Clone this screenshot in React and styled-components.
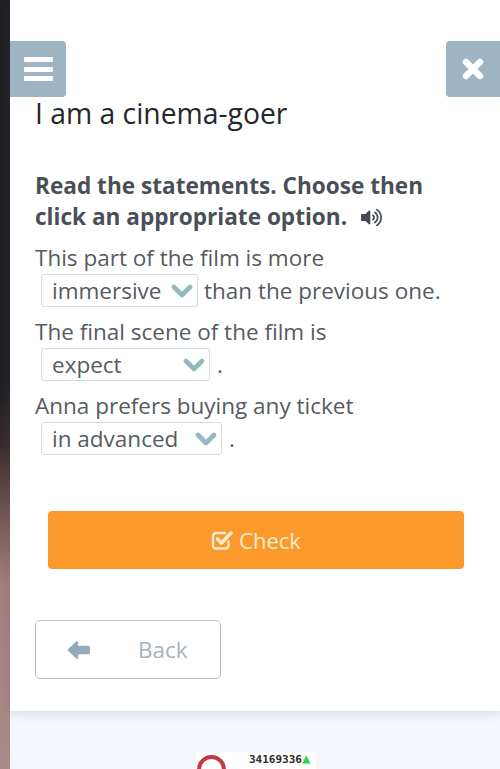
import React from "react";
import styled, { createGlobalStyle } from "styled-components";
import { FaVolumeUp } from "react-icons/fa";

const GlobalStyle = createGlobalStyle`
  html, body {
    margin: 0;
    padding: 0;
    background: #ffffff;
  }
  body {
    font-family: "Open Sans", "Liberation Sans", sans-serif;
    overflow: hidden;
  }
`;

const Page = styled.div`
  display: flex;
  width: 500px;
  height: 769px;
  overflow: hidden;
`;

const Strip = styled.div`
  flex: 0 0 10px;
  background: linear-gradient(180deg, #1f2024 0%, #1f2024 50%, #3a2c2e 58%, #6e5353 66%, #a67f7f 76%, #ab8a8a 100%);
`;

const Main = styled.div`
  flex: 1;
  display: flex;
  flex-direction: column;
  min-width: 0;
`;

const Card = styled.div`
  height: 711px;
  flex: none;
  background: #ffffff;
  box-shadow: 0 2px 10px rgba(70, 80, 90, 0.18);
  position: relative;
`;

const Header = styled.div`
  display: flex;
  justify-content: space-between;
  padding-top: 41px;
`;

const MenuButton = styled.div`
  width: 56px;
  height: 56px;
  background: #9fb4c3;
  border-radius: 0 4px 4px 0;
  display: flex;
  flex-direction: column;
  justify-content: center;
  align-items: center;
  gap: 4.5px;
`;

const MenuBar = styled.div`
  width: 29px;
  height: 5px;
  background: #ffffff;
  border-radius: 1px;
`;

const CloseButton = styled.div`
  width: 54px;
  height: 56px;
  background: #9fb4c3;
  border-radius: 4px 0 0 4px;
  display: flex;
  justify-content: center;
  align-items: center;
`;

const Content = styled.div`
  padding: 0 25px;
`;

const Title = styled.h1`
  margin: 0;
  font-size: 28.3px;
  line-height: 32px;
  font-weight: 400;
  color: #24282c;
`;

const Instructions = styled.div`
  margin-top: 41px;
  font-size: 22.6px;
  line-height: 31px;
  font-weight: 700;
  color: #4a4f57;
  width: 420px;
`;

const Speaker = styled(FaVolumeUp)`
  font-size: 21px;
  color: #444a58;
  margin-left: 14px;
  vertical-align: -3px;
`;

const Statement = styled.div`
  font-size: 22.5px;
  line-height: 33px;
  color: #565b60;
  margin-top: ${(p) => p.$top}px;
`;

const Answer = styled.div`
  display: flex;
  align-items: center;
  gap: 6px;
  margin-left: 6px;
`;

const Select = styled.div`
  box-sizing: border-box;
  width: ${(p) => p.$width}px;
  height: 33px;
  display: flex;
  align-items: center;
  justify-content: space-between;
  padding: 0 4px 0 10px;
  border: 1px solid #d5dcdf;
  border-radius: 3px;
  background: #ffffff;
`;

const Dot = styled.span`
  margin-left: 1px;
`;

const CheckButton = styled.div`
  margin: 56px 11px 0 13px;
  height: 58px;
  background: #fb9a2b;
  border-radius: 4px;
  color: #fdeccf;
  font-size: 22px;
  display: flex;
  justify-content: center;
  align-items: center;
  gap: 5px;
`;

const BackButton = styled.div`
  box-sizing: border-box;
  margin-top: 51px;
  width: 186px;
  height: 59px;
  border: 1.5px solid #b6c3cb;
  border-radius: 5px;
  background: #ffffff;
  color: #a3b4be;
  font-size: 22.5px;
  display: flex;
  align-items: center;
  padding-left: 30px;
  gap: 48px;
`;

const Footer = styled.div`
  flex: 1;
  background: #f4f7fb;
  display: flex;
  justify-content: center;
  padding-top: 41px;
`;

const Counter = styled.div`
  width: 120px;
  height: 40px;
  margin-left: 2px;
  background: #ffffff;
  display: flex;
  gap: 23px;
  padding: 0 0 0 1px;
  box-sizing: border-box;
`;

const Ring = styled.div`
  box-sizing: border-box;
  width: 29px;
  height: 29px;
  margin-top: 3px;
  border: 4px solid #c23a45;
  border-radius: 50%;
`;

const CounterValue = styled.div`
  font-family: "DejaVu Sans Mono", monospace;
  font-size: 11px;
  font-weight: 700;
  line-height: 15px;
  color: #2a2a2a;
  white-space: nowrap;
`;

const UpMark = styled.span`
  color: #35d14f;
  font-size: 14px;
  line-height: 12px;
`;

const CloseIcon = () => (
  <svg width="24" height="24" viewBox="0 0 24 24">
    <path d="M5 5L19 19M19 5L5 19" stroke="#ffffff" strokeWidth="6.5" strokeLinecap="round" />
  </svg>
);

const ChevronIcon = () => (
  <svg width="22" height="14" viewBox="0 0 22 14">
    <path d="M3 3L11 11L19 3" fill="none" stroke="#92b8c0" strokeWidth="4.6" strokeLinecap="round" strokeLinejoin="round" />
  </svg>
);

const CheckIcon = () => (
  <svg width="23" height="22" viewBox="0 0 23 22">
    <path d="M17.5 12.5V16.5A3 3 0 0 1 14.5 19.5H5A3 3 0 0 1 2 16.5V7A3 3 0 0 1 5 4H14" fill="none" stroke="#fdeccf" strokeWidth="2.4" strokeLinecap="round" />
    <path d="M6.5 10L10.5 14L20 4" fill="none" stroke="#fdeccf" strokeWidth="3.6" strokeLinecap="round" strokeLinejoin="round" />
  </svg>
);

const ArrowIcon = () => (
  <svg width="24" height="22" viewBox="0 0 24 22">
    <path d="M3 11L11 3.5V8H21.5A1.5 1.5 0 0 1 21.5 14H11V18.5Z" fill="#93acbb" stroke="#93acbb" strokeWidth="2.4" strokeLinejoin="round" />
  </svg>
);

const App = () => {
  return (
    <Page>
      <GlobalStyle />
      <Strip />
      <Main>
        <Card>
          <Header>
            <MenuButton>
              <MenuBar />
              <MenuBar />
              <MenuBar />
            </MenuButton>
            <CloseButton>
              <CloseIcon />
            </CloseButton>
          </Header>
          <Content>
            <Title>I am a cinema-goer</Title>
            <Instructions>
              Read the statements. Choose then click an appropriate option.
              <Speaker />
            </Instructions>
            <Statement $top={9}>
              This part of the film is more
              <Answer>
                <Select $width={157}>
                  immersive
                  <ChevronIcon />
                </Select>
                than the previous one.
              </Answer>
            </Statement>
            <Statement $top={8}>
              The final scene of the film is
              <Answer>
                <Select $width={169}>
                  expect
                  <ChevronIcon />
                </Select>
                <Dot>.</Dot>
              </Answer>
            </Statement>
            <Statement $top={8}>
              Anna prefers buying any ticket
              <Answer>
                <Select $width={181}>
                  in advanced
                  <ChevronIcon />
                </Select>
                <Dot>.</Dot>
              </Answer>
            </Statement>
            <CheckButton>
              <CheckIcon />
              Check
            </CheckButton>
            <BackButton>
              <ArrowIcon />
              Back
            </BackButton>
          </Content>
        </Card>
        <Footer>
          <Counter>
            <Ring />
            <CounterValue>
              34169336<UpMark>▲</UpMark>
            </CounterValue>
          </Counter>
        </Footer>
      </Main>
    </Page>
  );
};

export default App;
